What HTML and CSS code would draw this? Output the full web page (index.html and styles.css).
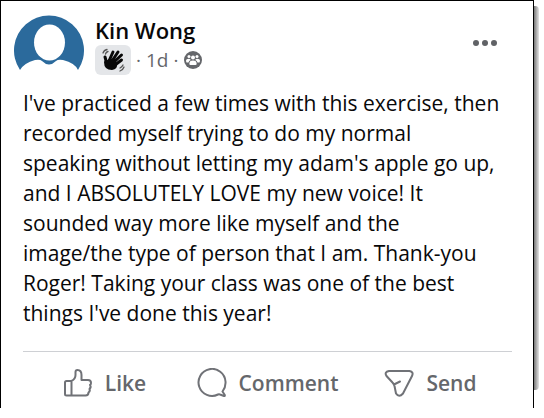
FILE: index.html
```html
<!DOCTYPE html>
<html lang="en">
<head>
<meta charset="utf-8">
<meta name="viewport" content="width=device-width, initial-scale=1">
<title>Kin Wong</title>
<link rel="stylesheet" href="styles.css">
</head>
<body>
<article class="post">
  <header class="post-header">
    <svg class="avatar" viewBox="0 0 70 56" aria-hidden="true">
      <path fill="#2b6a9c" d="M6 55A35 35 0 1 1 64 55Q61 48 49 45Q44 44 42 46Q35 53 28 46Q26 44 21 45Q10 48 6 55Z"/>
      <ellipse cx="35.500" cy="27.500" rx="15.500" ry="18" fill="#fff"/>
    </svg>
    <div class="author">
      <h1 class="name">Kin Wong</h1>
      <div class="meta">
        <span class="badge">
          <svg class="wave" viewBox="0 0 24 24" aria-hidden="true">
            <g fill="none" stroke="#080808" stroke-linecap="round">
              <path stroke-width="3" d="M8 13 12 4M11 13 17 4M13 14 20.500 7M14 17 20.500 12M6 16 4 9"/>
              <path stroke="#555" stroke-width="1.300" d="M2 5Q3 2 6 1.500M4.500 6Q5 4 7 3.500M19 20Q21 19 22 17M19 23Q22 22 23 19"/>
            </g>
            <path fill="#080808" d="M4 12Q7 13 8 11L14 11 16 16Q17 21 11 22Q3 22 3 14Z"/>
          </svg>
        </span>
        <span>·</span>
        <span>1d</span>
        <span>·</span>
        <svg class="group" viewBox="0 0 18 18" aria-hidden="true">
          <circle cx="9" cy="9" r="9" fill="#65676b"/>
          <g fill="#fff">
            <circle cx="5" cy="5.500" r="1.500"/>
            <circle cx="13" cy="5.500" r="1.500"/>
            <circle cx="9" cy="6.500" r="2"/>
            <path d="M2 10Q2 7.800 5 7.800Q6.300 8 6.800 9Q4.800 9.500 4.500 11.500H2.500ZM16 10Q16 7.800 13 7.800Q11.700 8 11.200 9Q13.200 9.500 13.500 11.500H15.500ZM5.300 13Q5.300 9.600 9 9.600Q12.700 9.600 12.700 13Q12.500 14 11.500 14H6.500Q5.500 14 5.300 13Z"/>
          </g>
        </svg>
      </div>
    </div>
    <button class="more" type="button" aria-label="More options">
      <svg class="dots" viewBox="0 0 24 6" aria-hidden="true">
        <g fill="#606266"><circle cx="3" cy="3" r="3"/><circle cx="12" cy="3" r="3"/><circle cx="21" cy="3" r="3"/></g>
      </svg>
    </button>
  </header>
  <p class="message">I've practiced a few times with this exercise, then<br>
    recorded myself trying to do my normal<br>
    speaking without letting my adam's apple go up,<br>
    and I ABSOLUTELY LOVE my new voice! It<br>
    sounded way more like myself and the<br>
    image/the type of person that I am. Thank-you<br>
    Roger! Taking your class was one of the best<br>
    things I've done this year!</p>
  <footer class="actions">
    <button class="action" type="button">
      <svg class="icon" viewBox="0 0 30 30" aria-hidden="true">
        <path d="M2 14.500Q2 13 3.500 13H8.500V27.500H3.500Q2 27.500 2 26ZM8.500 13Q12.500 11 12.500 7V4Q12.500 2 14.500 2Q18.500 2 18.500 7V12H25Q28 12 28 15Q28 16.500 27 17Q28.500 19 26.500 21Q27.500 23 25.500 24.500Q25.500 27.500 22.500 27.500H8.500"/>
      </svg>
      <span>Like</span>
    </button>
    <button class="action" type="button">
      <svg class="icon" viewBox="0 0 30 30" aria-hidden="true">
        <path d="M25.500 23.500Q29 19 28.500 13.500A13.500 13.500 0 1 0 21 26.500Q22 26 23 26.500L27 28Q28 28.300 27.800 27Z"/>
      </svg>
      <span>Comment</span>
    </button>
    <button class="action" type="button">
      <svg class="icon" viewBox="0 0 30 30" aria-hidden="true">
        <path d="M5 3H25.500Q30 4 28 8L19 25.500Q15 30 12 25.500L10.500 18Q10 16 8.500 14.500L2.500 8Q0 4 5 3ZM10 16.500 16 13.500"/>
      </svg>
      <span>Send</span>
    </button>
  </footer>
</article>
</body>
</html>
```
FILE: styles.css
```css
* {
  box-sizing: border-box;
}

body {
  margin: 0;
  background: #fff;
  color: #080809;
  font-family: "Open Sans", "Noto Sans", sans-serif;
}

.post {
  position: relative;
  margin-right: 10px;
  padding: 14px 21px 5px 22px;
  border: solid #000;
  border-width: 1px 1px 0;
  background: #fff;
}

.post::after {
  content: "";
  position: absolute;
  top: 5px;
  bottom: 18px;
  left: calc(100% + 1px);
  width: 5px;
  border-radius: 0 4px 4px 0;
  background: linear-gradient(to right, #777, #e4e4e4);
}

.post-header {
  display: flex;
  align-items: flex-start;
  margin-left: -9px;
}

.avatar {
  width: 70px;
  height: 56px;
}

.author {
  flex: 1;
  margin-left: 11px;
}

.name {
  margin: 0;
  font-size: 22px;
  font-weight: 600;
  line-height: 30px;
}

.meta {
  display: flex;
  align-items: center;
  gap: 5px;
  height: 30px;
  color: #65676b;
  font-size: 19px;
}

.badge {
  display: grid;
  place-items: center;
  width: 36px;
  height: 30px;
  border-radius: 6px;
  background: #e4e6e9;
}

.wave {
  width: 24px;
  height: 24px;
}

.group {
  width: 18px;
  height: 18px;
}

.more {
  margin: 17px 7px 0 0;
  padding: 8px;
  border: 0;
  background: none;
}

.dots {
  display: block;
  width: 24px;
  height: 6px;
}

.message {
  margin: 13px 0 23px;
  font-size: 21px;
  line-height: 30px;
}

.actions {
  display: grid;
  grid-template-columns: repeat(3, 1fr);
  padding-top: 11px;
  border-top: 1px solid #ced0d4;
}

.action {
  display: flex;
  align-items: center;
  justify-content: center;
  gap: 12px;
  height: 40px;
  padding: 0;
  border: 0;
  background: none;
  color: #65676b;
  font: 600 21px/30px "Open Sans", "Noto Sans", sans-serif;
}

.icon {
  width: 30px;
  height: 30px;
  fill: none;
  stroke: #707277;
  stroke-width: 2;
  stroke-linecap: round;
  stroke-linejoin: round;
}
```
